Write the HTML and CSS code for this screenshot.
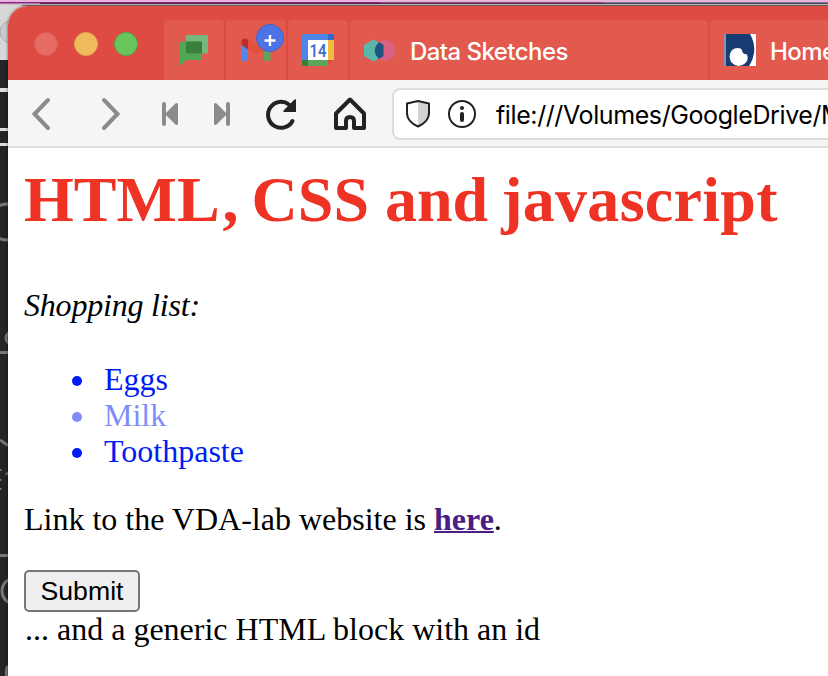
FILE: index.html
```html
<!DOCTYPE html>
<html lang="en">
<head>
<meta charset="utf-8">
<title>HTML, CSS and javascript</title>
<link rel="stylesheet" href="styles.css">
</head>
<body>
<svg class="desktop" width="828" height="676" viewBox="0 0 828 676" fill="none" aria-hidden="true">
  <path fill="#252525" d="M0 0h828v676H0z"/>
  <path fill="#d7d7d7" d="M0 0h40v60H0z"/>
  <path fill="#e7b3dd" d="M0 0h828v2H0z"/>
  <path fill="#8b217f" d="M0 2h380v1.500H0z"/>
  <path fill="#904572" d="M380 2h224v1.500H380z"/>
  <path fill="#777391" d="M604 2h224v1.500H604z"/>
  <path fill="#c8c2bf" d="M0 4h828v1H0z"/>
  <path fill="#80736e" d="M22 5h806v1H22z"/>
  <circle cx="11" cy="32" r="11" fill="#c9c9c9" stroke="#aaa"/>
  <path fill="#dedede" d="M0 88h8v4H0zM0 128h8v3H0zM0 143h8v3H0z"/>
  <g stroke="#777" stroke-width="3">
    <circle cx="7" cy="222" r="18"/>
    <circle cx="12" cy="338" r="6"/>
    <path d="M0 352.500h8M0 440l8 5.500M0 555.500h8"/>
    <circle cx="15" cy="591" r="13"/>
    <path d="M8 666q-2 2-1.500 10"/>
  </g>
  <path stroke="#777" stroke-width="2" d="M0 470h1.500M0 480h1.500M0 489h1.500M6 475l2-3"/>
</svg>
<div class="window">
  <header class="tabbar">
    <div class="lights"><i class="light close"></i><i class="light minimise"></i><i class="light zoom"></i></div>
    <div class="tabs">
      <div class="tab pinned">
        <svg width="60" height="60" viewBox="164 20 60 60">
          <rect x="186" y="35" width="22" height="18.500" rx="1.500" fill="#75b77c"/>
          <path fill="#50a655" d="M181.500 41.500H202V58.500q0 1.500-1.500 1.500H186l-4.500 5q-1.500 1-1.500-1V43q0-1.500 1.500-1.500z"/>
          <path fill="#39803a" d="M186 41.500h14.500q1.500 0 1.500 1.500v10.500h-14.500q-1.500 0-1.500-1.500z"/>
        </svg>
      </div>
      <div class="tab pinned">
        <svg width="60" height="60" viewBox="226 20 60 60">
          <path fill="#e1513e" d="M247 39l9 7 12-9v9l-12 9-9-6z"/>
          <path fill="#5387e9" d="M241.500 44.500l6.500 5V61h-5q-1.500 0-1.500-1.500z"/>
          <path fill="#b83025" d="M241.500 44.500V42a3.500 3.500 0 0 1 6-2.500l.500.500v9.500z"/>
          <path fill="#5ba65c" d="M264 51l6.500-5v13.500q0 1.500-1.500 1.500h-5z"/>
          <circle cx="270" cy="38" r="13.500" fill="#4e73e8" stroke="#4464c9"/>
          <path stroke="#fff" stroke-width="2.400" d="M264.500 40.500h11M270 35v11"/>
        </svg>
      </div>
      <div class="tab pinned">
        <svg width="60" height="60" viewBox="288 20 60 60">
          <path fill="#5085e8" d="M303.500 34H328v6h-20v20h-6V35.500q0-1.500 1.500-1.500z"/>
          <path fill="#3267ce" d="M328 34h4.500q1.500 0 1.500 1.500V40h-6z"/>
          <path fill="#f3bd42" d="M328 40h6v20h-6z"/>
          <path fill="#5ba65c" d="M308 60h20v6h-20z"/>
          <path fill="#3c8038" d="M302 60h6v6h-4.500q-1.500 0-1.500-1.500z"/>
          <path fill="#d9513d" d="M328 60h6l-6 6z"/>
          <path fill="#fff" d="M308 40h20v20h-20z"/>
          <text class="day" x="318" y="56.500" text-anchor="middle" textLength="17" lengthAdjust="spacingAndGlyphs">14</text>
        </svg>
      </div>
      <div class="tab wide">
        <svg class="icon" width="32" height="32" viewBox="364 34 32 32">
          <circle cx="385" cy="50.500" r="10.500" fill="#dc6082"/>
          <path fill="#59b8ac" d="M373.500 39.500l5.500 3q-8 8 0 16l-5.500 3-9.500-5.500V45z"/>
          <path fill="#205480" d="M379 42l4.500 3v11l-4.500 3q-8.500-8.500 0-17z"/>
        </svg>
        <span class="title sketches">Data Sketches</span>
      </div>
      <div class="tab wide">
        <svg class="icon" width="32" height="32" viewBox="0 0 32 32">
          <path fill="#fff" d="M0 0h32v32H0z"/>
          <path fill="#173b72" d="M2 0h24q9 16-1 32H2z"/>
          <path fill="#8197b5" d="M0 0h2v32H0z"/>
          <path fill="#fff" d="M14 14q3 0 4 2 0 4 5 4.500 2 5-1.500 8.500-3 3-7 3-8-1-9-9 .500-9 8.500-9z"/>
        </svg>
        <span class="title">Home</span>
      </div>
    </div>
  </header>
  <nav class="toolbar">
    <svg class="controls" width="384" height="66" viewBox="8 80 384 66" fill="none" stroke-linecap="round" stroke-linejoin="round">
      <path stroke="#8b8b8b" stroke-width="4" stroke-linejoin="miter" d="M48 100L34.500 114l13.500 14M104 100l13.500 14-13.500 14"/>
      <path stroke="#8b8b8b" stroke-width="4" d="M164 104v20M228 104v20"/>
      <path fill="#8b8b8b" stroke="#8b8b8b" stroke-width="3" d="M176.500 104.500v19l-9.500-9.500zM215.500 104.500v19l9.500-9.500z"/>
      <path stroke="#222" stroke-width="4" d="M289 104.500A13 13 0 1 0 292.500 121"/>
      <path fill="#222" d="M296 99.500V112h-12.500q-.500-1 .500-2l10-10q1-1 2-.500z"/>
      <path stroke="#222" stroke-width="4" d="M350 99.500L336 113.500V128h10v-7q0-4 4-4t4 4v7h10v-14.500z"/>
    </svg>
    <div class="address">
      <svg width="96" height="48" viewBox="394 90 96 48" fill="none">
        <path fill="#d2d2d2" d="M418 101l11 3v9q0 9-11 14z"/>
        <path stroke="#222" stroke-width="2" stroke-linejoin="round" d="M418 101l11 2.500V113c0 6-5 11-11 13.500-6-2.500-11-7.500-11-13.500v-9.500z"/>
        <circle cx="462" cy="114" r="13" stroke="#222" stroke-width="2"/>
        <circle cx="462" cy="108" r="2" fill="#222"/>
        <path stroke="#222" stroke-width="4" stroke-linecap="round" d="M462 114v6"/>
      </svg>
      <span class="url">file:///Volumes/GoogleDrive/M</span>
    </div>
  </nav>
  <main class="page">
    <h1>HTML<span class="comma">,</span> CSS and <span class="last">javascript</span></h1>
    <p class="lead">Shopping list:</p>
    <ul>
      <li>Eggs</li>
      <li class="faded">Milk</li>
      <li>Toothpaste</li>
    </ul>
    <p>Link to the VDA-lab website is <a href="#">here</a>.</p>
    <button type="button">Submit</button>
    <div class="block">... and a generic HTML block with an id</div>
  </main>
</div>
</body>
</html>
```
FILE: styles.css
```css
* { box-sizing: border-box; }

body {
  margin: 0;
  height: 676px;
  overflow: hidden;
  background: #252525;
}

svg { display: block; flex: none; }

.desktop { position: absolute; top: 0; left: 0; z-index: -1; }

.window {
  margin: 6px 0 0 8px;
  height: 670px;
  display: flex;
  flex-direction: column;
  overflow: hidden;
  border-top-left-radius: 20px;
  background: #fff;
  box-shadow: 0 0 3px rgba(0, 0, 0, .6);
}

.tabbar {
  flex: none;
  height: 74px;
  display: flex;
  align-items: flex-end;
  background: #dd4b42;
}

.lights {
  width: 156px;
  height: 74px;
  padding: 26px 0 0 26px;
  display: flex;
  gap: 16px;
  flex: none;
}

.light { width: 24px; height: 24px; border-radius: 50%; }
.close { background: #e66b64; border: 1px solid #d9615a; }
.minimise { background: #efbb5b; border: 1px solid #e3a950; }
.zoom { background: #67c55b; border: 1px solid #55a844; }

.tabs { display: flex; gap: 2px; }

.tab {
  height: 60px;
  flex: none;
  display: flex;
  align-items: center;
  background: #e2594e;
  border-radius: 4px 4px 0 0;
}

.pinned { width: 60px; }
.wide { width: 358px; padding-left: 14px; gap: 14px; }

.title {
  color: #fff;
  font: 500 24px/32px Inter, sans-serif;
  letter-spacing: -.55px;
  white-space: nowrap;
  padding-top: 3px;
}

.day { font: 600 18.5px Roboto, sans-serif; fill: #3b6fcf; }

.toolbar {
  flex: none;
  height: 68px;
  display: flex;
  align-items: center;
  background: #f5f5f5;
  border-bottom: 2px solid #dedede;
}

.address {
  width: 460px;
  flex: none;
  height: 52px;
  margin-top: 2px;
  display: flex;
  align-items: center;
  background: #fff;
  border: 2px solid #dcdcdc;
  border-radius: 8px;
}

.url {
  font: 400 25px/32px Inter, sans-serif;
  letter-spacing: -.4px;
  padding-left: 6px;
  padding-top: 2px;
  white-space: nowrap;
}

.page {
  padding: 16px 16px 0;
  font: 32px/36px "Liberation Serif", serif;
  color: #000;
}

h1 {
  margin: 0 0 51px;
  font-size: 64px;
  line-height: 72px;
  color: #ee3224;
  white-space: nowrap;
}

.comma { margin: 0 -3px 0 3px; }
.last { margin-left: -3px; letter-spacing: .3px; }

p { margin: 0 0 32px; }

.lead {
  margin-bottom: 38px;
  font-family: "Apple Chancery", "Liberation Serif", cursive;
  font-style: italic;
  letter-spacing: -.2px;
}

ul { margin: 0 0 32px; padding-left: 80px; color: #001cf5; list-style: none; }
li::before {
  content: "";
  display: inline-block;
  width: 10px;
  height: 10px;
  margin: 0 22px 4px -32px;
  border-radius: 50%;
  background: currentColor;
}
.faded { opacity: .5; }

a { color: #4b1e83; font-weight: bold; text-decoration-thickness: 2px; }

button {
  display: block;
  width: 116px;
  height: 42px;
  margin-top: 33px;
  padding: 0;
  border: 2px solid #767676;
  border-radius: 5px;
  background: #efefef;
  font: 26.67px/36px "Liberation Sans", sans-serif;
  color: #000;
}

.block { margin-top: -1px; padding-left: 1px; }
```
